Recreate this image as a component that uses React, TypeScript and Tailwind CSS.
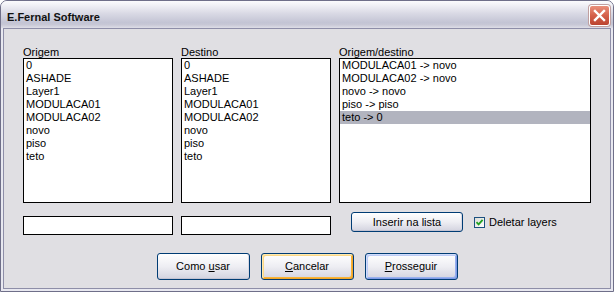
import { ReactNode } from "react";

const FONT = "font-['Liberation_Sans',Arial,sans-serif]";

const origem = ["0", "ASHADE", "Layer1", "MODULACA01", "MODULACA02", "novo", "piso", "teto"];
const pares = ["MODULACA01 -> novo", "MODULACA02 -> novo", "novo -> novo", "piso -> piso", "teto -> 0"];

function ListBox({ label, items, width, selected }: { label: string; items: string[]; width: string; selected?: number }) {
  return (
    <div className={`flex flex-col ${width}`}>
      <div className="h-[11px] leading-[11px] text-[11px] text-black">{label}</div>
      <div className="h-[145px] border border-black bg-white">
        {items.map((it, i) => (
          <div
            key={it}
            className={`h-[13px] leading-[13px] text-[11px] pl-[2px] whitespace-nowrap ${i === selected ? "bg-[#b2b4bf]" : ""}`}
          >
            {it}
          </div>
        ))}
      </div>
    </div>
  );
}

function XpButton({ children, className, ring }: { children: ReactNode; className: string; ring?: "orange" | "blue" }) {
  const inner =
    ring === "orange"
      ? "shadow-[inset_1px_1px_0_#ffe9b0,inset_-1px_-1px_0_#f0a428,inset_2px_2px_0_#fbd887,inset_-2px_-2px_0_#f8b438]"
      : ring === "blue"
        ? "shadow-[inset_1px_1px_0_#d0dcfb,inset_-1px_-1px_0_#7f9be6,inset_2px_2px_0_#bccbf5,inset_-2px_-2px_0_#98b0ee]"
        : "shadow-[inset_0_-1px_0_#c3c3d2,inset_-1px_0_0_#d8d8e3]";
  return (
    <button
      className={`${className} ${inner} flex items-center justify-center whitespace-pre rounded-[3px] border border-[#003c74] bg-linear-to-b from-white via-[#eeeef3] to-[#d3d3df] text-[11px] text-black`}
    >
      {children}
    </button>
  );
}

export default function App() {
  return (
    <div className={`w-[614px] h-[292px] bg-white ${FONT}`}>
      <div className="w-[614px] h-[292px] flex flex-col rounded-t-[7px] border border-[#6f6f89] bg-[#e4e4ec] overflow-hidden">
        {/* Title bar */}
        <div className="h-[27px] shrink-0 flex items-start justify-between pl-[6px] pr-[3px] bg-[linear-gradient(to_bottom,#fbfbfd_0%,#f1f1f6_15%,#dadae5_45%,#c3c4d4_80%,#c8c8d6_88%,#dedee7_100%)]">
          <div className="pt-[10px] leading-[13px] text-[11px] font-bold text-[#111]">E.Fernal Software</div>
          <div className="mt-[4px] w-[21px] h-[21px] rounded-[3px] border border-white bg-linear-to-b from-[#e9907b] via-[#d4604a] to-[#bb4430] shadow-[0_0_0_1px_#c0a0a0] flex items-center justify-center">
            <svg width="13" height="13" viewBox="0 0 13 13">
              <path d="M2 2 L11 11 M11 2 L2 11" stroke="white" strokeWidth="2.4" strokeLinecap="square" />
            </svg>
          </div>
        </div>

        {/* Frame */}
        <div className="flex-1 px-[2px] pb-[2px] bg-[#e8e8f0]">
          <div className="h-full border border-[#8e8ea8] bg-[#e0dfe3] pt-[18px]">
            {/* Lists */}
            <div className="flex gap-[8px] pl-[19px]">
              <ListBox label="Origem" items={origem} width="w-[150px]" />
              <ListBox label="Destino" items={origem} width="w-[150px]" />
              <ListBox label="Origem/destino" items={pares} width="w-[252px]" selected={4} />
            </div>

            {/* Inputs row */}
            <div className="flex items-start h-[23px] mt-[9px] pl-[19px]">
              <div className="mt-[4px] w-[150px] h-[19px] border border-black bg-white" />
              <div className="mt-[4px] ml-[8px] w-[150px] h-[19px] border border-black bg-white" />
              <XpButton className="ml-[20px] w-[112px] h-[20px]">Inserir na lista</XpButton>
              <div className="ml-[11px] mt-[5px] flex items-center">
                <div className="w-[11px] h-[11px] border border-[#1c5180] bg-linear-to-br from-[#dcdcd6] to-white flex items-center justify-center">
                  <svg width="9" height="9" viewBox="0 0 9 9">
                    <path d="M1.5 4.2 L3.6 6.4 L7.6 1.8" stroke="#21a121" strokeWidth="1.8" fill="none" />
                  </svg>
                </div>
                <span className="ml-[4px] text-[11px] leading-[11px] text-black">Deletar layers</span>
              </div>
            </div>

            {/* Bottom buttons */}
            <div className="flex justify-center gap-[11px] mt-[18px]">
              <XpButton className="w-[93px] h-[27px]">
                {"Como "}<span className="underline">u</span>sar
              </XpButton>
              <XpButton className="w-[93px] h-[27px]" ring="orange">
                <span className="underline">C</span>ancelar
              </XpButton>
              <XpButton className="w-[93px] h-[27px]" ring="blue">
                <span className="underline">P</span>rosseguir
              </XpButton>
            </div>
          </div>
        </div>
      </div>
    </div>
  );
}
